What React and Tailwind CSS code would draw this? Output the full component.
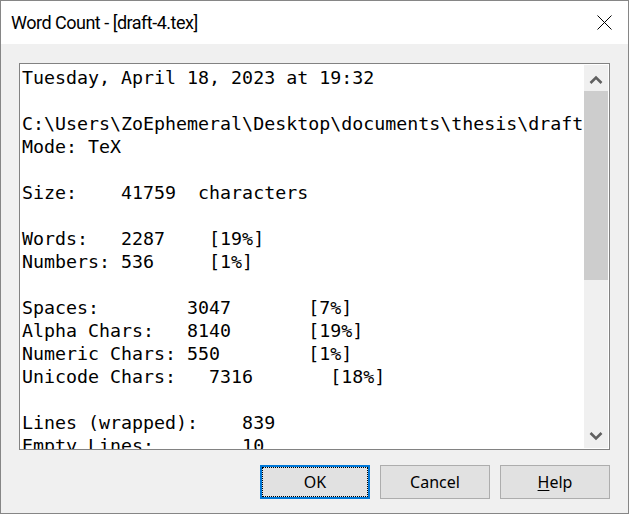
import React from "react";

const lines = [
  "Tuesday, April 18, 2023 at 19:32",
  "",
  "C:\\Users\\ZoEphemeral\\Desktop\\documents\\thesis\\draft",
  "Mode: TeX",
  "",
  "Size:    41759  characters",
  "",
  "Words:   2287    [19%]",
  "Numbers: 536     [1%]",
  "",
  "Spaces:        3047       [7%]",
  "Alpha Chars:   8140       [19%]",
  "Numeric Chars: 550        [1%]",
  "Unicode Chars:   7316       [18%]",
  "",
  "Lines (wrapped):    839",
  "Empty Lines:        10",
];

function Chevron({ dir }) {
  const pts = dir === "up" ? "6.5,18 12,12.5 17.5,18" : "6.5,11 12,16.5 17.5,11";
  return (
    <svg width="24" height="26" viewBox="0 0 24 26">
      <polyline points={pts} fill="none" stroke="#606060" strokeWidth="2.6" />
    </svg>
  );
}

export default function App() {
  return (
    <div className="flex h-[514px] w-[629px] flex-col border border-[#868686] bg-[#f0f0f0] font-['Noto_Sans',sans-serif] text-black">
      {/* title bar */}
      <div className="flex h-[43px] shrink-0 items-center justify-between bg-white pl-[10px] pr-[16px]">
        <span className="font-['Roboto',sans-serif] text-[18px] tracking-[-0.5px]">Word Count - [draft-4.tex]</span>
        <svg width="15" height="15" viewBox="0 0 15 15">
          <path d="M0.5 0.5 L14.5 14.5 M14.5 0.5 L0.5 14.5" stroke="#000" strokeWidth="1" />
        </svg>
      </div>

      <div className="flex flex-1 flex-col px-[18px] pt-[19px]">
        {/* report box */}
        <div className="flex h-[387px] border border-[#828282] bg-white">
          <div className="flex-1 overflow-hidden whitespace-pre pl-[2px] pt-[2px] font-['DejaVu_Sans_Mono',monospace] text-[18.3px] leading-[23px]">
            {lines.map((l, i) => (
              <div key={i} className="h-[23px]">
                {l}
              </div>
            ))}
          </div>
          <div className="my-[1px] mr-[1px] flex w-[24px] flex-col bg-[#f0f0f0]">
            <div className="h-[26px]">
              <Chevron dir="up" />
            </div>
            <div className="h-[189px] bg-[#cdcdcd]" />
            <div className="flex-1" />
            <div className="h-[26px]">
              <Chevron dir="down" />
            </div>
          </div>
        </div>

        {/* buttons */}
        <div className="mt-[15px] flex justify-end gap-[10px] text-[16px]">
          <button className="h-[34px] w-[110px] border-2 border-[#0078d7] bg-[#e1e1e1] outline-1 outline-dotted outline-black -outline-offset-[3px]">
            OK
          </button>
          <button className="h-[34px] w-[110px] border border-[#adadad] bg-[#e1e1e1]">
            Cancel
          </button>
          <button className="h-[34px] w-[110px] border border-[#adadad] bg-[#e1e1e1]">
            <span className="underline underline-offset-2">H</span>elp
          </button>
        </div>
      </div>
    </div>
  );
}
